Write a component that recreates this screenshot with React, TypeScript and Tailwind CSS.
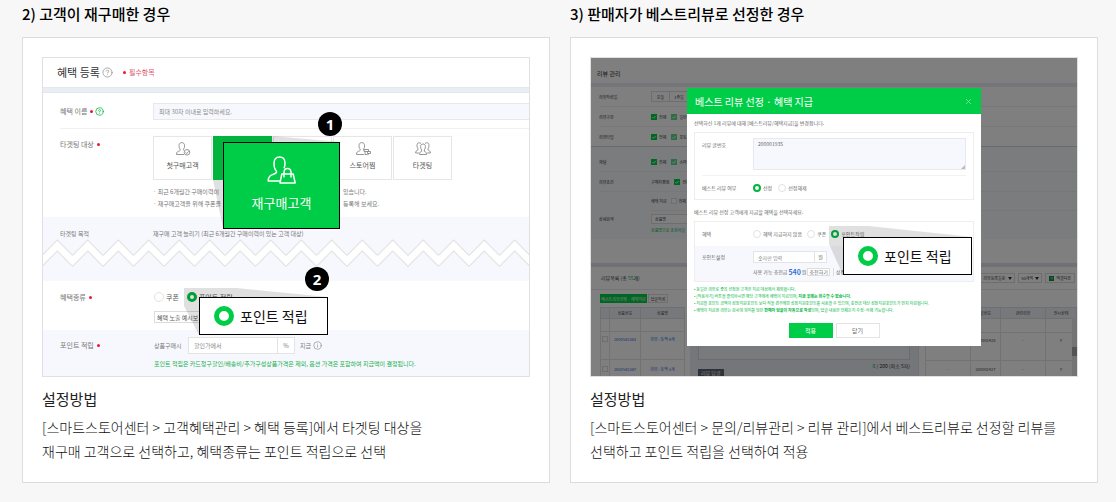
import React from 'react';
import { CircleHelp, Info, X } from 'lucide-react';

const Dot: React.FC = () => (
  <span className="inline-block size-[3px] shrink-0 rounded-full bg-[#f0142f]" />
);

const Radio: React.FC<{
  name: string;
  label: string;
  checked?: boolean;
  big?: boolean;
}> = ({ name, label, checked, big }) => (
  <label className="flex shrink-0 items-center gap-[2px] whitespace-nowrap">
    <input
      type="radio"
      name={name}
      defaultChecked={checked}
      className={`shrink-0 appearance-none rounded-full border border-[#e2e2e2] bg-white checked:border-[#00b53f] ${
        big
          ? 'size-[10px] checked:border-[3px]'
          : 'size-[8px] checked:border-[2px]'
      }`}
    />
    {label}
  </label>
);

const Check: React.FC<{ label: string; tone?: 'on' | 'soft' | 'off' }> = ({
  label,
  tone = 'on',
}) => (
  <label className="flex items-center gap-[2px] whitespace-nowrap">
    <span className="relative size-[6px]">
      <input
        type="checkbox"
        defaultChecked={tone !== 'off'}
        className={`block size-[6px] appearance-none ${
          tone === 'on'
            ? 'bg-[#00d14a]'
            : tone === 'soft'
              ? 'bg-[#5ed88a]'
              : 'border border-[#dddddd] bg-white'
        }`}
      />
      {tone !== 'off' && (
        <svg
          viewBox="0 0 6 6"
          className="pointer-events-none absolute inset-0 size-[6px]"
        >
          <path
            d="M1.3 3 L2.6 4.3 L4.8 1.9"
            fill="none"
            stroke="#fff"
            strokeWidth="0.8"
          />
        </svg>
      )}
    </span>
    {label}
  </label>
);

const SmallSelect: React.FC<{ label: string; value: string }> = ({
  label,
  value,
}) => (
  <div className="relative">
    <select
      aria-label={label}
      className="block h-[10px] appearance-none border border-[#dddddd] pr-2 pl-[2px]"
    >
      <option>{value}</option>
    </select>
    <svg
      viewBox="0 0 4 3"
      className="pointer-events-none absolute top-1 right-[3px] h-[3px] w-1"
    >
      <path d="M0 0H4L2 3Z" fill="#333" />
    </svg>
  </div>
);

const ShopperIcon: React.FC = () => (
  <svg
    viewBox="0 0 30 28"
    className="h-7 w-[30px]"
    fill="none"
    stroke="#fff"
    strokeWidth="1.5"
    strokeLinejoin="round"
  >
    <path d="M13 25H1.2c0-4 1.3-5.400 4.300-6.400 2.300-.8 4-1.300 4-2.700 0-1-.7-1.500-1.400-2.700C7.300 11.800 7 9.600 7 7.200 7 3.200 9.200 1 12.500 1S18 3.200 18 7.200c0 2-.3 3.800-1 5.200" />
    <path d="M14.800 18h11.400l2 9H13z" />
    <path d="M17 21.500v-5c0-2.600 1.400-4 3.500-4s3.500 1.400 3.500 4v5" />
  </svg>
);

const PersonIcon: React.FC<{ extra: 'new' | 'store' | 'group' }> = ({
  extra,
}) => (
  <svg
    viewBox="0 0 16 14"
    className="h-[14px] w-4"
    fill="none"
    stroke="#8a8a8a"
    strokeWidth="0.9"
    strokeLinejoin="round"
  >
    {extra === 'group' ? (
      <>
        <path d="M4.500 12.500h7c0-2-.7-2.600-2.200-3.200V8c.8-1 1.100-2 1.100-3.400C10.400 2.800 9.500 2 8 2s-2.400.8-2.400 2.600C5.600 6 5.900 7 6.700 8v1.300c-1.500.6-2.200 1.200-2.200 3.200z" />
        <path d="M6 1.500C5.500 1 4.900.8 4.200.8 2.800.8 2 1.700 2 3.400 2 4.800 2.300 6 3 6.800v1.100C1.500 8.500.6 9.200.6 11h3.600" />
        <path d="M10 1.500c.5-.5 1.100-.7 1.800-.7 1.400 0 2.200.9 2.200 2.600 0 1.400-.3 2.600-1 3.400v1.100c1.500.6 2.400 1.300 2.400 3.100h-3.600" />
      </>
    ) : (
      <path d="M9 12.500H1.500c0-2.500 1-3 3-3.600 1-.3 1-1.300.4-2C4.300 6 4 5 4 3.800 4 1.700 5.100.6 6.800.6s2.800 1.100 2.800 3.200c0 1.200-.3 2.200-.9 3.100-.4.700-.3 1.300.3 1.700" />
    )}
    {extra === 'new' && (
      <>
        <circle cx="12" cy="10.300" r="2.800" />
        <path d="M10.500 10.500l1.300 1 1.800-2.200" />
      </>
    )}
    {extra === 'store' && (
      <path d="M9 7.500h4.500v2H9zM10 9.500v3h2.500M12.500 9.500h3v2h-3zM13.200 11.500v1.500" />
    )}
  </svg>
);

const TargetCard: React.FC<{
  extra: 'new' | 'store' | 'group';
  label: string;
}> = ({ extra, label }) => (
  <button className="flex h-11 w-[59px] flex-col items-center gap-[3px] border border-[#e6e6e6] bg-white pt-[5px] leading-3 text-[#555]">
    <PersonIcon extra={extra} />
    <span className="text-[7px]">{label}</span>
  </button>
);

const PointCallout: React.FC<{ name: string }> = ({ name }) => (
  <label className="flex h-[38px] w-[129px] items-center gap-[6px] border border-black bg-white pl-[14px] text-[14px] whitespace-nowrap text-[#111]">
    <input
      type="radio"
      name={name}
      defaultChecked
      className="size-5 shrink-0 appearance-none rounded-full border-[5px] border-[#00cd47] bg-white"
    />
    포인트 적립
  </label>
);

const Badge: React.FC<{ children: React.ReactNode }> = ({ children }) => (
  <span className="flex size-6 items-center justify-center rounded-full bg-black font-['Open_Sans',sans-serif] text-[15px] leading-6 font-bold text-white">
    {children}
  </span>
);

const Zigzag: React.FC = () => (
  <svg className="relative -mx-px -mt-[3px] block h-7 w-[calc(100%+2px)]">
    <defs>
      <pattern
        id="zigzag"
        width="30.5"
        height="28"
        patternUnits="userSpaceOnUse"
      >
        <path
          d="M0 16.500L15.250 1L30.500 16.500V27.500L15.250 12L0 27.500Z"
          fill="#fff"
        />
        <path
          d="M0 16.500L15.250 1L30.500 16.500M0 27.500L15.250 12L30.500 27.500"
          fill="none"
          stroke="#dedede"
        />
      </pattern>
    </defs>
    <rect width="100%" height="28" fill="url(#zigzag)" />
  </svg>
);

const BenefitForm: React.FC = () => (
  <div className="relative overflow-hidden border border-[#e0e0e0] bg-white text-[6px] text-[#777]">
    <header className="flex h-[29px] items-center pl-[14px]">
      <h3 className="text-[11px] text-[#333]">혜택 등록</h3>
      <CircleHelp className="ml-[2px] size-[11px] text-[#888]" strokeWidth={1.5} />
      <span className="ml-[10px] flex items-center gap-[3px] text-[7px] text-[#e0566c]">
        <Dot />
        필수항목
      </span>
    </header>
    <div className="h-[6px] border-y border-[#e4e7ec] bg-[#e9edf4]" />

    <div className="ml-[17px] flex border-b border-[#f0f0f0] pt-[10px] pb-2">
      <label
        htmlFor="benefit-name"
        className="flex w-[93px] items-center gap-[3px] text-[7px]"
      >
        혜택 이름 <Dot />
        <CircleHelp className="-ml-px size-[9px] text-[#00b53f]" />
      </label>
      <input
        id="benefit-name"
        placeholder="최대 30자 이내로 입력하세요."
        className="h-[17px] min-w-0 flex-1 border-y border-l border-[#e6e8ee] bg-[#f7f8fd] pl-[5px] placeholder:text-[#888]"
      />
    </div>

    <div className="ml-[17px] flex pt-[7px] pb-[7px]">
      <span className="flex h-4 w-[93px] items-center gap-[3px] text-[7px]">
        타겟팅 대상 <Dot />
      </span>
      <div>
        <div className="flex gap-px">
          <TargetCard extra="new" label="첫구매고객" />
          <div className="h-11 w-[59px] bg-[#00cd47]" />
          <div className="h-11 w-[59px] border border-[#e6e6e6]" />
          <TargetCard extra="store" label="스토어찜" />
          <TargetCard extra="group" label="타겟팅" />
        </div>
        <p className="mt-[6px] flex gap-[120px] leading-3">
          <span className="w-[70px] whitespace-nowrap">
            · 최근 6개월간 구매이력이
          </span>
          <span>있습니다.</span>
        </p>
        <p className="flex gap-[120px] leading-3">
          <span className="w-[70px] whitespace-nowrap">
            · 재구매고객을 위해 쿠폰을
          </span>
          <span>등록해 보세요.</span>
        </p>
      </div>
    </div>

    <div className="bg-[#f7f8fd] pt-[9px] pb-[14px]">
      <div className="flex pl-[17px] leading-4">
        <span className="w-[93px]">타겟팅 목적</span>
        <span>
          재구매 고객 늘리기 (최근 6개월간 구매이력이 있는 고객 대상)
        </span>
      </div>
      <Zigzag />
    </div>

    <div className="flex pt-[10px] pb-[7px] pl-[17px]">
      <span className="flex h-3 w-[94px] items-center gap-[3px] text-[7px]">
        혜택종류 <Dot />
      </span>
      <div className="text-[#555]">
        <div className="flex h-3 items-center gap-2 text-[7px]">
          <Radio name="benefit" label="쿠폰" big />
          <Radio name="benefit" label="포인트 적립" checked big />
        </div>
        <button className="mt-2 flex h-3 items-center border border-[#dcdcdc] bg-white px-[2px] whitespace-nowrap">
          혜택 노출 예시보기
        </button>
      </div>
    </div>

    <div className="flex bg-[#f7f8fd] pt-[7px] pb-[6px] pl-[17px]">
      <span className="flex h-[17px] w-[94px] items-center gap-[3px] text-[7px]">
        포인트 적립 <Dot />
      </span>
      <div>
        <div className="flex items-center">
          <label htmlFor="point-rate" className="w-[34px]">
            상품구매시
          </label>
          <input
            id="point-rate"
            placeholder="할인가에서"
            className="h-[17px] w-[90px] border border-[#e4e4e4] bg-white pl-[5px] placeholder:text-[#888]"
          />
          <span className="flex h-[17px] w-[17px] items-center justify-center border border-l-0 border-[#e4e4e4] bg-white">
            %
          </span>
          <span className="ml-[5px]">지급</span>
          <Info className="ml-[2px] size-[9px]" strokeWidth={1.5} />
        </div>
        <p className="mt-1 leading-3 whitespace-nowrap text-[#12b04a]">
          포인트 적립은 카드청구할인/배송비/추가구성상품가격은 제외, 옵션
          가격은 포함하여 지급액이 결정됩니다.
        </p>
      </div>
    </div>

    <svg className="pointer-events-none absolute inset-0 h-full w-full">
      <path
        d="M170 78H229L297 84L180 170L170 122Z"
        fill="#000"
        fillOpacity="0.12"
      />
      <path
        d="M141 230H194L285 239L156 277L141 248Z"
        fill="#000"
        fillOpacity="0.12"
      />
    </svg>
    <button className="absolute top-[84px] left-[180px] flex h-[87px] w-[117px] flex-col items-center gap-[9px] border border-black bg-[#00cd47] pt-[13px] text-[13px] leading-5 text-white">
      <ShopperIcon />
      재구매고객
    </button>
    <div className="absolute top-[239px] left-[156px]">
      <PointCallout name="benefit-point" />
    </div>
    <div className="absolute top-[54px] left-[275px]">
      <Badge>1</Badge>
    </div>
    <div className="absolute top-[209px] left-[262px]">
      <Badge>2</Badge>
    </div>
  </div>
);

const FilterRow: React.FC<{ label: string; children: React.ReactNode }> = ({
  label,
  children,
}) => (
  <div className="ml-2 flex h-5 items-center border-b border-[#eeeeee]">
    <span className="w-[52px]">{label}</span>
    <div className="flex items-center gap-[5px]">{children}</div>
  </div>
);

const ReviewList: React.FC = () => (
  <div className="flex flex-1 overflow-hidden text-[4px]">
    <table className="ml-[9px] h-min w-[85px] table-fixed border-collapse text-center text-[#2f6be0] [&_td]:border [&_td]:border-[#e4e4e4] [&_th]:border [&_th]:border-[#dcdfe6] [&_th]:font-normal">
      <thead>
        <tr className="h-[11px] bg-[#eef1f6] text-[#444]">
          <th className="w-[9px]" />
          <th className="w-[31px]">상품번호</th>
          <th>상품명</th>
        </tr>
      </thead>
      <tbody>
        <tr className="h-[13px]">
          <td />
          <td />
          <td />
        </tr>
        <tr className="h-[14px] [&>td]:border-b-0">
          <td>
            <input
              type="checkbox"
              aria-label="2000542363"
              className="mx-auto block size-[6px] appearance-none border border-[#ddd]"
            />
          </td>
          <td>2000542363</td>
          <td>리뷰 : 토픽 9개</td>
        </tr>
        <tr className="h-[14px] [&>td]:border-t-0">
          <td />
          <td />
          <td />
        </tr>
        <tr className="h-[18px]">
          <td>
            <input
              type="checkbox"
              aria-label="2000542367"
              className="mx-auto block size-[6px] appearance-none border border-[#ddd]"
            />
          </td>
          <td>2000542367</td>
          <td>리뷰 : 토픽 3개</td>
        </tr>
      </tbody>
    </table>
    <div className="ml-[5px] flex flex-1 flex-col border-r border-[#dfe3ea] bg-[#e9edf4] px-2">
      <div className="h-[54px] border border-[#d4d8e0] bg-[#f3f4f8]" />
      <div className="flex items-start justify-between pt-[2px] text-[5px] leading-[7px]">
        <span className="mt-[7px] bg-[#5c6475] px-[3px] text-white">
          리뷰 답글
        </span>
        <span>
          <span className="text-[#00b53f]">0</span> / 200 (최소 5자)
        </span>
      </div>
    </div>
    <table className="mr-[2px] ml-[6px] h-min w-[152px] table-fixed border-collapse text-center text-[#444] [&_td]:border [&_td]:border-[#e4e4e4] [&_th]:border [&_th]:border-[#dcdfe6] [&_th]:font-normal">
      <thead>
        <tr className="h-[11px] bg-[#eef1f6]">
          <th className="w-[45px]" />
          <th className="w-[30px]">글번호</th>
          <th className="w-[45px]">관련리뷰</th>
          <th>전시상태</th>
        </tr>
      </thead>
      <tbody>
        <tr className="h-[14px]">
          <td />
          <td />
          <td />
          <td />
        </tr>
        <tr className="h-[14px] [&>td]:border-b-0">
          <td>-</td>
          <td>200001928</td>
          <td>-</td>
          <td>Y</td>
        </tr>
        <tr className="h-[14px] [&>td]:border-t-0">
          <td />
          <td />
          <td />
          <td />
        </tr>
        <tr className="h-[17px]">
          <td>-</td>
          <td>200001927</td>
          <td>-</td>
          <td>Y</td>
        </tr>
      </tbody>
    </table>
    <div className="-ml-[7px] mt-[11px] w-[5px] bg-[#e8e8e8] pt-[29px]">
      <div className="h-[9px] bg-[#a8a8a8]" />
    </div>
  </div>
);

const BestReviewModal: React.FC = () => (
  <div className="absolute top-[30px] left-1/2 w-[294px] -translate-x-1/2 bg-white pb-2 text-[5px] text-[#666]">
    <header className="flex h-[26px] items-center justify-between bg-[#00cd47] px-2 text-[10px] text-white">
      <h3>베스트 리뷰 선정 · 혜택 지급</h3>
      <button aria-label="닫기" className="opacity-70">
        <X className="size-[9px]" strokeWidth={1.5} />
      </button>
    </header>
    <div className="px-[7px] pt-[5px]">
      <p className="leading-2">
        선택하신 <span className="text-[#00b53f]">1</span>개 리뷰에 대해
        [베스트리뷰/혜택지급]을 변경합니다.
      </p>
      <div className="mt-[5px] border border-[#eeeeee] px-[7px]">
        <div className="flex border-b border-[#f2f2f2] pt-[5px] pb-[5px]">
          <label htmlFor="review-no" className="w-[51px] pt-[3px] leading-2">
            리뷰 글번호
          </label>
          <div className="relative flex flex-1">
            <textarea
              id="review-no"
              defaultValue="200001935"
              className="h-8 min-w-0 flex-1 resize-none border border-[#e8e9ee] bg-[#f7f8fd] px-1 py-[1px] leading-2"
            />
            <svg
              viewBox="0 0 4 4"
              className="pointer-events-none absolute right-px bottom-px size-1"
            >
              <path d="M4 0V4H0Z" fill="#bbb" />
            </svg>
          </div>
        </div>
        <div className="flex h-[23px] items-center">
          <span className="w-[51px]">베스트 리뷰 여부</span>
          <div className="flex gap-[6px]">
            <Radio name="best" label="선정" checked />
            <Radio name="best" label="선정해제" />
          </div>
        </div>
      </div>
      <p className="mt-2 leading-2">
        베스트 리뷰 선정 고객에게 지급할 혜택을 선택하세요.
      </p>
      <div className="mt-[5px] border border-[#eeeeee]">
        <div className="flex h-6 items-center px-[7px]">
          <span className="w-[51px]">혜택</span>
          <div className="flex gap-[5px]">
            <Radio name="reward" label="혜택 지급하지 않음" />
            <Radio name="reward" label="쿠폰" />
            <Radio name="reward" label="포인트적립" checked />
          </div>
        </div>
        <div className="flex bg-[#f7f8fd] px-[7px] pt-[5px] pb-1">
          <label htmlFor="point-value" className="w-[51px] leading-3">
            포인트설정
          </label>
          <div>
            <div className="flex">
              <input
                id="point-value"
                placeholder="숫자만 입력"
                className="h-3 w-[62px] border border-[#e4e4e4] bg-white pl-1 placeholder:text-[#888]"
              />
              <span className="flex h-3 w-3 items-center justify-center border border-l-0 border-[#e4e4e4] bg-white">
                원
              </span>
            </div>
            <div className="mt-1 flex h-[10px] items-center gap-px whitespace-nowrap">
              사용 가능 충전금
              <b className="text-[7px] text-[#2f74d8]">540</b>원
              <button className="flex h-2 items-center border border-[#dddddd] bg-white px-px">
                충전하기
              </button>
              <span className="ml-[2px] border-l border-[#dddddd] pl-[2px]">
                성장
              </span>
            </div>
          </div>
        </div>
      </div>
      <ul className="mt-1 text-[4px] leading-[7px] whitespace-nowrap text-[#00b53f]">
        <li>• 동일한 리뷰로 중복 선정된 고객은 지급 대상에서 제외됩니다.</li>
        <li>
          • [적용하기] 버튼을 클릭하시면 해당 고객에게 혜택이 지급되며,{' '}
          <b>지급 후에는 회수할 수 없습니다.</b>
        </li>
        <li>
          • 지급할 포인트 금액이 성장지원포인트 보다 적을 경우에만
          성장지원포인트를 사용할 수 있으며, 충전금 대신 성장지원포인트가 먼저
          차감됩니다.
        </li>
        <li>
          • 혜택이 지급된 리뷰는 감사의 의미를 담은{' '}
          <b>판매자 답글이 자동으로 작성</b>되며, 답글 내용은 언제든지
          수정·삭제 가능합니다.
        </li>
      </ul>
      <div className="mt-[9px] flex justify-center gap-[3px]">
        <button className="h-[15px] w-11 bg-[#00cd47] text-[6px] text-white">
          적용
        </button>
        <button className="h-[15px] w-11 border border-[#e4e4e4] text-[6px]">
          닫기
        </button>
      </div>
    </div>
    <svg className="pointer-events-none absolute inset-0 h-full w-full">
      <path
        d="M142 138H182L285 149L156 187L142 156Z"
        fill="#000"
        fillOpacity="0.12"
      />
    </svg>
    <div className="absolute top-[149px] left-[156px]">
      <PointCallout name="reward-point" />
    </div>
  </div>
);

const ReviewAdmin: React.FC = () => (
  <div className="relative flex h-80 flex-col overflow-hidden border border-[#e0e0e0] bg-white text-[4px] text-[#333]">
    <h3 className="h-[25px] pt-1 pl-[6px] text-[6px] leading-6">리뷰 관리</h3>
    <div className="h-1 bg-[#e9edf4]" />
    <FilterRow label="리뷰작성일">
      <div className="flex">
        <button className="h-[11px] w-[19px] border border-[#dddddd]">
          오늘
        </button>
        <button className="h-[11px] w-[19px] border border-l-0 border-[#dddddd]">
          1주일
        </button>
      </div>
    </FilterRow>
    <FilterRow label="리뷰구분">
      <Check label="전체" />
      <Check label="일반" tone="soft" />
    </FilterRow>
    <div className="flex h-5 items-center border-b border-[#d0d4da] pl-2">
      <span className="w-[52px]">리뷰타입</span>
      <div className="flex items-center gap-[5px]">
        <Check label="전체" />
        <Check label="포토" tone="soft" />
      </div>
    </div>
    <div className="bg-[#f7f8fd] pt-[5px] pb-[6px]">
      <FilterRow label="채널">
        <Check label="전체" />
        <Check label="스마" tone="soft" />
      </FilterRow>
      <FilterRow label="리뷰조건">
        구매자평점
        <Check label="전체" />
      </FilterRow>
      <div className="ml-[60px] flex h-[19px] items-center gap-1 border-b border-[#eeeeee]">
        혜택 지급 <Check label="전체" tone="off" />
      </div>
      <div className="ml-2 flex pt-[3px]">
        <label htmlFor="detail-search" className="w-[52px] leading-[10px]">
          상세검색
        </label>
        <div>
          <input
            id="detail-search"
            defaultValue="상품명"
            className="block h-[10px] w-20 border border-[#dddddd] bg-white pl-[3px]"
          />
          <p className="mt-[3px] leading-[6px] text-[#00b53f]">
            상품명으로 조회하실
          </p>
        </div>
      </div>
    </div>
    <div className="mt-6 h-1 shrink-0 bg-[#dfe3ea]" />
    <div className="flex h-[23px] shrink-0 items-center justify-between border-b border-[#e8e8e8] pr-[2px] pl-[10px]">
      <span className="text-[5px]">
        리뷰목록 (총 <span className="text-[#00b53f]">55</span>개)
      </span>
      <div className="flex gap-[3px]">
        <SmallSelect label="정렬" value="리뷰등록일순" />
        <SmallSelect label="목록 개수" value="50개씩" />
        <button className="flex h-[10px] items-center gap-[2px] border border-[#dddddd] px-[3px]">
          <span className="flex size-[5px] items-center justify-center bg-[#128a45] text-white">
            ×
          </span>
          엑셀다운
        </button>
      </div>
    </div>
    <div className="flex h-[17px] shrink-0 items-center gap-px pl-[9px]">
      <button className="h-[9px] w-[47px] bg-[#00cd47] text-white">
        베스트리뷰선정 · 혜택지급
      </button>
      <button className="h-[9px] w-5 border border-[#dddddd]">답글작성</button>
    </div>
    <ReviewList />
    <div className="absolute inset-0 bg-black/50" />
    <BestReviewModal />
  </div>
);

const GuideCard: React.FC<{
  title: string;
  lines: string[];
  children: React.ReactNode;
}> = ({ title, lines, children }) => (
  <section>
    <h2 className="mb-[13px] text-[15px] leading-5 font-medium text-black">
      {title}
    </h2>
    <div className="border border-[#dcdcdc] bg-white p-[19px]">
      {children}
      <h4 className="mt-3 text-[15px] leading-5 text-[#222]">설정방법</h4>
      <p className="mt-[6px] text-[14px] leading-6 font-light text-[#111]">
        {lines.map((line) => (
          <span key={line} className="block">
            {line}
          </span>
        ))}
      </p>
    </div>
  </section>
);

const App: React.FC = () => (
  <main className="grid min-h-screen grid-cols-2 content-start gap-5 bg-[#f7f7f7] pt-1 pr-[18px] pl-[22px] font-['Noto_Sans_CJK_KR',sans-serif]">
    <GuideCard
      title="2) 고객이 재구매한 경우"
      lines={[
        '[스마트스토어센터 > 고객혜택관리 > 혜택 등록]에서 타겟팅 대상을',
        '재구매 고객으로 선택하고, 혜택종류는 포인트 적립으로 선택',
      ]}
    >
      <BenefitForm />
    </GuideCard>
    <GuideCard
      title="3) 판매자가 베스트리뷰로 선정한 경우"
      lines={[
        '[스마트스토어센터 > 문의/리뷰관리 > 리뷰 관리]에서 베스트리뷰로 선정할 리뷰를',
        '선택하고 포인트 적립을 선택하여 적용',
      ]}
    >
      <ReviewAdmin />
    </GuideCard>
  </main>
);

export default App;
